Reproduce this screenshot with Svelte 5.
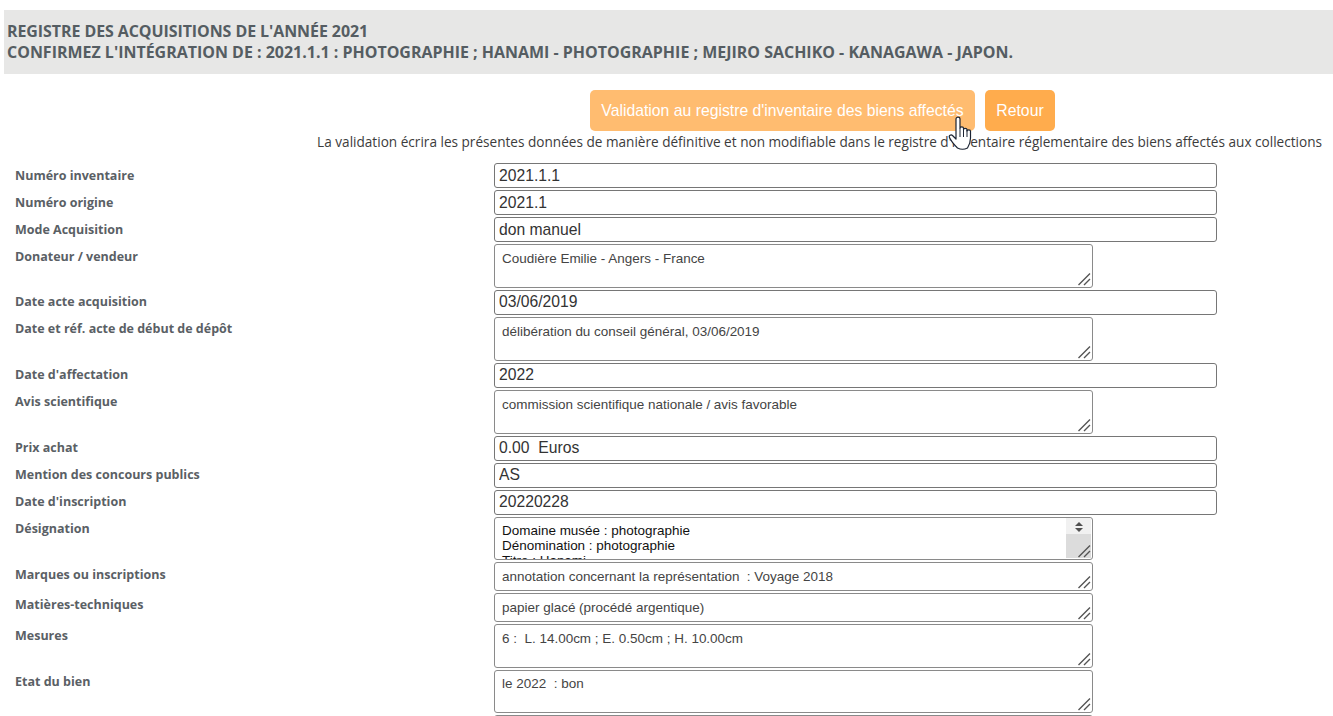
<script>
  const rows = [
    { label: "Numéro inventaire", value: "2021.1.1" },
    { label: "Numéro origine", value: "2021.1" },
    { label: "Mode Acquisition", value: "don manuel" },
    { label: "Donateur / vendeur", value: "Coudière Emilie - Angers - France", area: "tall" },
    { label: "Date acte acquisition", value: "03/06/2019" },
    { label: "Date et réf. acte de début de dépôt", value: "délibération du conseil général, 03/06/2019", area: "tall" },
    { label: "Date d'affectation", value: "2022" },
    { label: "Avis scientifique", value: "commission scientifique nationale / avis favorable", area: "tall" },
    { label: "Prix achat", value: "0.00  Euros" },
    { label: "Mention des concours publics", value: "AS" },
    { label: "Date d'inscription", value: "20220228" },
    { label: "Désignation", value: "Domaine musée : photographie\nDénomination : photographie\nTitre : Hanami\nAuteur : Mejiro Sachiko\nLieu : Kanagawa - Japon", area: "scroll" },
    { label: "Marques ou inscriptions", value: "annotation concernant la représentation  : Voyage 2018", area: "short" },
    { label: "Matières-techniques", value: "papier glacé (procédé argentique)", area: "short" },
    { label: "Mesures", value: "6 :  L. 14.00cm ; E. 0.50cm ; H. 10.00cm", area: "tall" },
    { label: "Etat du bien", value: "le 2022  : bon", area: "tall" },
    { label: "", value: "", area: "tall" }
  ];
</script>

<main class="page">
  <header class="title">
    <div class="line-one">REGISTRE DES ACQUISITIONS DE L'ANNÉE 2021</div>
    <div>CONFIRMEZ L'INTÉGRATION DE : 2021.1.1 : PHOTOGRAPHIE ; HANAMI - PHOTOGRAPHIE ; MEJIRO SACHIKO - KANAGAWA - JAPON.</div>
  </header>

  <div class="actions">
    <button class="btn hover">Validation au registre d'inventaire des biens affectés</button>
    <button class="btn back">Retour</button>
    <svg class="cursor" viewBox="0 0 26 34" width="26" height="34" aria-hidden="true">
      <path d="M8 3c0-2.500 4-2.500 4 0v9c0-1.500 3.500-1.500 3.500 0v1.500c0-1.500 3.500-1.500 3.500 0V15c0-1.500 3.500-1.500 3.500 0v7c0 4-1 7-3 10-3 1.500-7 1.500-10 0C6.500 29 3 25 1.500 21.500c-1-2 1.500-3.500 3-2L8 23Z" fill="#fff" stroke="#1c2433" stroke-width="1.200" stroke-linejoin="round"/>
      <path d="M12 12v9M15.500 13v8M19 14v7" stroke="#1c2433" stroke-width="1" fill="none"/>
    </svg>
  </div>
  <p class="note">La validation écrira les présentes données de manière définitive et non modifiable dans le registre d'inventaire réglementaire des biens affectés aux collections</p>

  <form class="form">
    {#each rows as row, i}
      <label class="label" for="f{i}">{row.label}</label>
      {#if row.area}
        <div class="wrap {row.area}">
          <textarea id="f{i}" class="area" readonly value={row.value}></textarea>
          {#if row.area === "scroll"}
            <div class="bar">
              <svg class="arrows" viewBox="0 0 10 12" width="10" height="12" aria-hidden="true">
                <path d="M5 1 9 5H1ZM1 7h8L5 11Z" fill="#505050"/>
              </svg>
              <div class="thumb"></div>
            </div>
          {/if}
          <svg class="grip" viewBox="0 0 14 14" width="14" height="14" aria-hidden="true">
            <path d="M1.500 13 13 1.500M7 13l6-6" stroke="#555" stroke-width="1.400" fill="none"/>
          </svg>
        </div>
      {:else}
        <input id="f{i}" class="field" readonly value={row.value} />
      {/if}
    {/each}
  </form>
</main>

<style>
  :global(html), :global(body) {
    margin: 0;
    height: 716px;
    overflow: hidden;
    background: #fff;
  }
  .page {
    padding-top: 10px;
    font-family: "Open Sans", sans-serif;
  }
  .title {
    margin-left: 4px;
    height: 64px;
    box-sizing: border-box;
    padding: 11px 3px 0;
    background: #e7e7e6;
    color: #555d62;
    font-size: 15.98px;
    font-weight: 700;
    line-height: 21px;
    white-space: nowrap;
  }
  .line-one {
    letter-spacing: -0.07px;
  }
  .actions {
    position: relative;
    display: flex;
    gap: 10px;
    margin-top: 16px;
    padding-left: 590px;
  }
  .btn {
    width: 385px;
    height: 41px;
    padding: 0;
    border: 0;
    border-radius: 5px;
    background: #ffac4d;
    color: #fff;
    font-family: "Liberation Sans", sans-serif;
    font-size: 15.75px;
  }
  .btn.back {
    width: 70px;
  }
  .btn.hover {
    background: #ffbc70;
  }
  .cursor {
    position: absolute;
    left: 948px;
    top: 26px;
    z-index: 2;
  }
  .note {
    margin: 2px 11px 0 0;
    text-align: right;
    color: #3c3c3c;
    font-size: 13.6px;
    line-height: 17px;
    white-space: nowrap;
  }
  .form {
    display: grid;
    grid-template-columns: 479px 1fr;
    row-gap: 2px;
    margin-top: 13px;
    padding-left: 15px;
  }
  .label {
    padding-top: 3.55px;
    color: #5a6065;
    font-size: 12.5px;
    font-weight: 700;
    line-height: 17px;
  }
  .field, .area {
    display: block;
    box-sizing: border-box;
    margin: 0;
    border: 1px solid #767676;
    border-radius: 3px;
    outline: 0;
    font-family: "Liberation Sans", sans-serif;
  }
  .field {
    width: 723px;
    height: 25px;
    padding: 1px 4px;
    color: #333;
    font-size: 15.7px;
  }
  .wrap {
    position: relative;
    width: 599px;
  }
  .area {
    width: 100%;
    height: 100%;
    padding: 6.85px 7px 6px;
    border-color: #8a8a8a;
    overflow: hidden;
    color: #444;
    font-size: 13.47px;
    line-height: 14px;
    resize: none;
  }
  .tall { height: 43.9px; }
  .short { height: 28.85px; }
  .scroll { height: 43.3px; }
  .scroll .area {
    padding-top: 5px;
    color: #111;
    line-height: 15px;
  }
  .bar {
    position: absolute;
    top: 1px;
    right: 2px;
    bottom: 2px;
    width: 25px;
    display: flex;
    flex-direction: column;
    background: #f1f1f1;
  }
  .arrows {
    display: block;
    margin: 3px auto 1px;
  }
  .thumb {
    flex: 1;
    background: #dcdcdc;
  }
  .grip {
    position: absolute;
    right: 2px;
    bottom: 2px;
  }
</style>
